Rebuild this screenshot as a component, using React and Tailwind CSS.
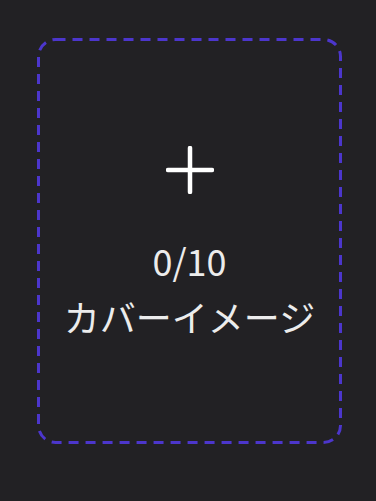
export default function App() {
  return (
    <div
      className="w-[376px] h-[501px] bg-[#222124] pt-[38px] pl-[37px]"
      style={{ fontFamily: '"Noto Sans CJK JP", "Noto Sans", sans-serif' }}
    >
      {/* cover image picker */}
      <div className="relative w-[305px] h-[406px] flex flex-col items-center justify-center pt-[8px]">
        {/* dashed outline, drawn so the dash length matches */}
        <svg className="absolute inset-0 pointer-events-none" width="305" height="406" viewBox="0 0 305 406" fill="none">
          <rect x="1.5" y="1.5" width="302" height="403" rx="17" stroke="#4c36cc" strokeWidth="3" strokeDasharray="10 7" />
        </svg>
        <svg width="48" height="48" viewBox="0 0 48 48" fill="none">
          <path d="M24 2v44M2 24h44" stroke="#ffffff" strokeWidth="4.5" strokeLinecap="round" />
        </svg>
        <div className="mt-[38px] text-center text-[36px] leading-[56px] text-[#ececec]">
          <div>0/10</div>
          <div>カバーイメージ</div>
        </div>
      </div>
    </div>
  );
}
